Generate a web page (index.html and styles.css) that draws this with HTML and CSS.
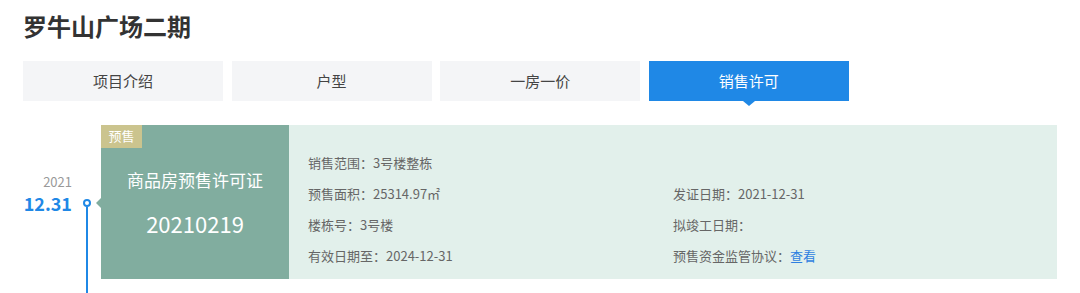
FILE: index.html
```html
<!DOCTYPE html>
<html>
<head>
  <meta charset="utf-8">
  <title>罗牛山广场二期</title>
  <link rel="stylesheet" href="styles.css">
</head>
<body>
  <div class="page">
    <h1 class="title">罗牛山广场二期</h1>

    <div class="tabs">
      <div class="tab">项目介绍</div>
      <div class="tab">户型</div>
      <div class="tab">一房一价</div>
      <div class="tab active">销售许可</div>
    </div>

    <div class="record">
      <div class="timeline">
        <div class="date">
          <div class="year">2021</div>
          <div class="day">12.31</div>
        </div>
        <div class="axis">
          <span class="dot"></span>
          <span class="line"></span>
        </div>
      </div>

      <div class="card">
        <div class="card-main">
          <span class="badge">预售</span>
          <div class="cert-name">商品房预售许可证</div>
          <div class="cert-no">20210219</div>
        </div>
        <div class="card-info">
          <div class="item">销售范围：3号楼整栋</div>
          <div class="item"></div>
          <div class="item">预售面积：25314.97㎡</div>
          <div class="item">发证日期：2021-12-31</div>
          <div class="item">楼栋号：3号楼</div>
          <div class="item">拟竣工日期：</div>
          <div class="item">有效日期至：2024-12-31</div>
          <div class="item">预售资金监管协议：<a href="#" class="link">查看</a></div>
        </div>
      </div>
    </div>
  </div>
</body>
</html>
```

FILE: styles.css
```css
body {
  margin: 0;
  font-family: "Noto Sans CJK SC", "Noto Sans", sans-serif;
  background-color: #ffffff;
  color: #333333;
}

.page {
  padding: 10px 23px 0 23px;
}

.title {
  margin: 0;
  font-size: 24px;
  line-height: 32px;
  font-weight: bold;
  color: #333333;
}

.tabs {
  display: flex;
  gap: 8.6px;
  margin-top: 19px;
}

.tab {
  position: relative;
  width: 200px;
  height: 40px;
  line-height: 40px;
  text-align: center;
  font-size: 15px;
  color: #444444;
  background-color: #f4f5f7;
}

.tab.active {
  background-color: #1f88e6;
  color: #ffffff;
}

.tab.active::after {
  content: "";
  position: absolute;
  left: 50%;
  bottom: -5px;
  margin-left: -6px;
  border-left: 6px solid transparent;
  border-right: 6px solid transparent;
  border-top: 5px solid #1f88e6;
}

.record {
  display: flex;
  align-items: flex-start;
  margin-top: 24px;
}

.timeline {
  display: flex;
  width: 78px;
  height: 180px;
  flex-shrink: 0;
}

.date {
  width: 49px;
  padding-top: 48px;
  text-align: right;
}

.year {
  font-size: 13px;
  line-height: 18px;
  color: #999999;
}

.day {
  font-size: 18px;
  line-height: 24px;
  font-weight: bold;
  color: #1f88e6;
}

.axis {
  display: flex;
  flex-direction: column;
  align-items: center;
  width: 8px;
  margin-left: 11px;
  padding-top: 74px;
}

.dot {
  width: 4px;
  height: 4px;
  border: 2px solid #1f88e6;
  border-radius: 50%;
  background-color: #ffffff;
}

.line {
  flex: 1;
  width: 2px;
  background-color: #1f88e6;
}

.card {
  display: flex;
  flex: 1;
  height: 154px;
}

.card-main {
  position: relative;
  width: 188px;
  flex-shrink: 0;
  padding-top: 43px;
  box-sizing: border-box;
  background-color: #81ad9f;
  color: #ffffff;
  text-align: center;
}

.card-main::before {
  content: "";
  position: absolute;
  left: -5px;
  top: 73px;
  border-top: 5px solid transparent;
  border-bottom: 5px solid transparent;
  border-right: 5px solid #81ad9f;
}

.badge {
  position: absolute;
  left: 0;
  top: 0;
  width: 41px;
  height: 23px;
  line-height: 22px;
  font-size: 13px;
  background-color: #cbc48e;
  color: #ffffff;
}

.cert-name {
  font-size: 17px;
  line-height: 24px;
}

.cert-no {
  margin-top: 16px;
  font-size: 22px;
  line-height: 30px;
}

.card-info {
  flex: 1;
  display: grid;
  grid-template-columns: 365px 1fr;
  grid-auto-rows: 31px;
  align-content: start;
  padding: 22px 0 0 19px;
  background-color: #e2f0eb;
}

.item {
  font-size: 13px;
  line-height: 31px;
  color: #666666;
}

.link {
  color: #2f7fe0;
  text-decoration: none;
}
```
